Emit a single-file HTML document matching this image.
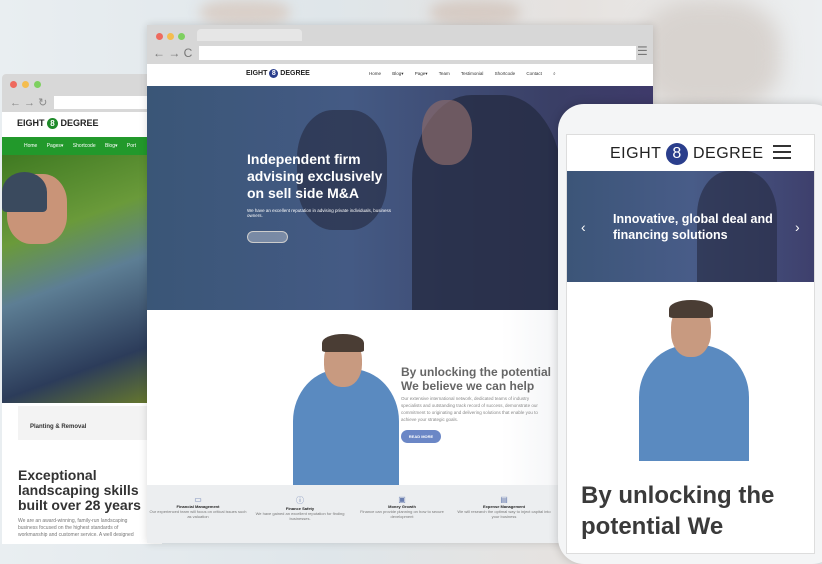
<!DOCTYPE html><html><head><style>
*{margin:0;padding:0;box-sizing:border-box}
body{width:822px;height:543px;overflow:hidden;position:relative;font-family:"Liberation Sans",sans-serif;background:linear-gradient(90deg,#e9eef1,#dfe6ea 40%,#e6e2df 70%,#eceff1)}
.abs{position:absolute}
.dot{position:absolute;width:7px;height:7px;border-radius:50%}
</style></head><body>
<div class="abs" style="left:200px;top:0;width:90px;height:25px;background:#d9cfc8;border-radius:40%;filter:blur(6px)"></div>
<div class="abs" style="left:430px;top:0;width:90px;height:25px;background:#d6cbc4;border-radius:40%;filter:blur(6px)"></div>
<div class="abs" style="left:640px;top:0;width:140px;height:110px;background:#d8d3cf;border-radius:40%;filter:blur(10px)"></div>

<!-- left browser -->
<div class="abs" style="left:2px;top:74px;width:160px;height:470px;background:#fff;border-radius:4px 0 0 0;overflow:hidden">
 <div class="abs" style="left:0;top:0;width:160px;height:38px;background:#d8d8d8"></div>
 <div class="dot" style="left:8px;top:7px;background:#ee6a5e"></div><div class="dot" style="left:20px;top:7px;background:#f4bd4f"></div><div class="dot" style="left:32px;top:7px;background:#7ed060"></div>
 <div class="abs" style="left:8px;top:22px;font-size:11px;color:#888">← → ↻</div>
 <div class="abs" style="left:52px;top:22px;width:110px;height:13px;background:#fff"></div>
 <div class="abs" style="left:15px;top:44px;font-size:9px;font-weight:bold;color:#222">EIGHT <span style="display:inline-block;width:11px;height:11px;border-radius:50%;background:#1f8a2a;color:#fff;text-align:center;font-size:8px;line-height:11px">8</span> DEGREE</div>
 <div class="abs" style="left:0;top:63px;width:160px;height:18px;background:#22992b;color:#fff;font-size:5px;line-height:18px;padding-left:22px;word-spacing:8px">Home Pages▾ Shortcode Blog▾ Port</div>
 <div class="abs" style="left:0;top:81px;width:160px;height:248px;background:linear-gradient(160deg,#3f7a22,#6a9a3a 30%,#5d7e94 50%,#2c3c5a 80%,#6a7c2a)"></div>
 <div class="abs" style="left:5px;top:100px;width:60px;height:70px;border-radius:40%;background:#c99478"></div>
 <div class="abs" style="left:0;top:98px;width:45px;height:40px;border-radius:50% 50% 10% 10%;background:#3a4a5e"></div>
 <div class="abs" style="left:16px;top:332px;width:140px;height:34px;background:#f3f3f3"></div>
 <div class="abs" style="left:28px;top:350px;font-size:6px;font-weight:bold;color:#333">Planting &amp; Removal</div>
 <div class="abs" style="left:16px;top:394px;font-size:14px;font-weight:bold;color:#333;line-height:15px">Exceptional<br>landscaping skills<br>built over 28 years</div>
 <div class="abs" style="left:16px;top:444px;font-size:5px;color:#777;line-height:7px;width:125px">We are an award-winning, family-run landscaping business focused on the highest standards of workmanship and customer service. A well designed</div>
</div>

<!-- middle browser -->
<div class="abs" style="left:147px;top:25px;width:506px;height:518px;background:#fff;overflow:hidden;box-shadow:0 0 8px rgba(0,0,0,.15)">
 <div class="abs" style="left:0;top:0;width:506px;height:39px;background:#d7d7d7"></div>
 <div class="abs" style="left:50px;top:4px;width:105px;height:12px;background:#e6e6e6;border-radius:4px 4px 0 0"></div>
 <div class="dot" style="left:9px;top:8px;background:#ee6a5e"></div><div class="dot" style="left:20px;top:8px;background:#f4bd4f"></div><div class="dot" style="left:31px;top:8px;background:#7ed060"></div>
 <div class="abs" style="left:6px;top:21px;font-size:12px;color:#777">← → C</div>
 <div class="abs" style="left:52px;top:21px;width:437px;height:14px;background:#fff"></div>
 <div class="abs" style="left:490px;top:19px;font-size:12px;color:#777">☰</div>
 <div class="abs" style="left:99px;top:44px;font-size:7px;font-weight:bold;color:#222">EIGHT <span style="display:inline-block;width:9px;height:9px;border-radius:50%;background:#2a3e8c;color:#fff;text-align:center;font-size:7px;line-height:9px">8</span> DEGREE</div>
 <div class="abs" style="left:222px;top:46px;font-size:4.5px;color:#333;word-spacing:10px">Home Blog▾ Page▾ Team Testimonial Shortcode Contact ⌕</div>
 <div class="abs" style="left:0;top:61px;width:506px;height:224px;background:linear-gradient(90deg,#3a5677,#445a84 40%,#3a3f66 80%,#3e3a6a)"></div>
 <div class="abs" style="left:150px;top:85px;width:90px;height:120px;border-radius:40%;background:#2a3048;opacity:.7"></div>
 <div class="abs" style="left:265px;top:70px;width:150px;height:215px;border-radius:40% 40% 0 0;background:#252c44;opacity:.8"></div>
 <div class="abs" style="left:275px;top:75px;width:50px;height:65px;border-radius:45%;background:#8a6a6a;opacity:.7"></div>
 <div class="abs" style="left:100px;top:126px;font-size:14px;font-weight:bold;color:#fff;line-height:17px">Independent firm<br>advising exclusively<br>on sell side M&amp;A</div>
 <div class="abs" style="left:100px;top:183px;font-size:4.5px;color:#fff;width:160px">We have an excellent reputation in advising private individuals, business owners.</div>
 <div class="abs" style="left:100px;top:206px;width:41px;height:12px;border:1px solid #ccc;border-radius:6px;background:rgba(255,255,255,.3)"></div>
 <div class="abs" style="left:0;top:285px;width:506px;height:175px;background:linear-gradient(90deg,#fff 70%,#e4e7eb)"></div>
 <div class="abs" style="left:146px;top:344px;width:106px;height:116px;border-radius:45% 45% 0 0;background:#5a8ac0"></div>
 <div class="abs" style="left:177px;top:312px;width:38px;height:50px;border-radius:45%;background:#c89a80"></div>
 <div class="abs" style="left:175px;top:309px;width:42px;height:18px;border-radius:50% 50% 10% 10%;background:#4a3d34"></div>
 <div class="abs" style="left:254px;top:340px;font-size:12px;font-weight:bold;color:#666;line-height:14px">By unlocking the potential<br>We believe we can help</div>
 <div class="abs" style="left:254px;top:370px;font-size:4.5px;color:#888;line-height:7px;width:146px">Our extensive international network, dedicated teams of industry specialists and outstanding track record of success, demonstrate our commitment to originating and delivering solutions that enable you to achieve your strategic goals.</div>
 <div class="abs" style="left:254px;top:405px;width:40px;height:13px;border-radius:7px;background:#6b87c6;color:#fff;font-size:4px;font-weight:bold;text-align:center;line-height:13px">READ MORE</div>
 <div class="abs" style="left:0;top:460px;width:506px;height:58px;background:#eceef0"></div>
 <div class="abs" style="left:0;top:470px;width:506px;display:flex;font-size:4px;color:#777;text-align:center">
  <div style="width:102px"><div style="color:#6b7fb0;font-size:8px">▭</div><b style="color:#222">Financial Management</b><br>Our experienced team will focus on critical issues such as valuation</div>
  <div style="width:102px"><div style="color:#6b7fb0;font-size:8px">ⓘ</div><b style="color:#222">Finance Safety</b><br>We have gained an excellent reputation for finding businesses.</div>
  <div style="width:102px"><div style="color:#6b7fb0;font-size:8px">▣</div><b style="color:#222">Money Growth</b><br>Finance can provide planning on how to secure development</div>
  <div style="width:102px"><div style="color:#6b7fb0;font-size:8px">▤</div><b style="color:#222">Expense Management</b><br>We will research the optimal way to inject capital into your business</div>
 </div>
</div>

<!-- phone -->
<div class="abs" style="left:558px;top:104px;width:280px;height:460px;background:#f4f5f6;border-radius:26px;box-shadow:0 0 10px rgba(0,0,0,.2)"></div>
<div class="abs" style="left:566px;top:134px;width:249px;height:420px;background:#fff;overflow:hidden;border:1px solid #ddd">
 <div class="abs" style="left:43px;top:8px;font-size:16px;color:#222;letter-spacing:.5px">EIGHT <span style="display:inline-block;width:22px;height:22px;border-radius:50%;background:#2a3e8c;color:#fff;text-align:center;font-size:16px;line-height:22px">8</span> DEGREE</div>
 <div class="abs" style="left:206px;top:10px;width:18px;height:2px;background:#333;box-shadow:0 6px 0 #333,0 12px 0 #333"></div>
 <div class="abs" style="left:0;top:36px;width:249px;height:111px;background:linear-gradient(90deg,#3c5578,#485c88 50%,#3e3f6c)"></div>
 <div class="abs" style="left:130px;top:36px;width:80px;height:111px;border-radius:40% 40% 0 0;background:#2a2f48;opacity:.7"></div>
 <div class="abs" style="left:46px;top:76px;font-size:12.5px;font-weight:bold;color:#fff;line-height:16px">Innovative, global deal and<br>financing solutions</div>
 <div class="abs" style="left:14px;top:84px;color:#fff;font-size:14px">‹</div><div class="abs" style="left:228px;top:84px;color:#fff;font-size:14px">›</div>
 <div class="abs" style="left:72px;top:210px;width:110px;height:116px;border-radius:45% 45% 0 0;background:#5a8ac0"></div>
 <div class="abs" style="left:104px;top:168px;width:40px;height:54px;border-radius:45%;background:#c89a80"></div>
 <div class="abs" style="left:102px;top:165px;width:44px;height:18px;border-radius:50% 50% 10% 10%;background:#4a3d34"></div>
 <div class="abs" style="left:14px;top:345px;font-size:24px;font-weight:bold;color:#3a3a3a;line-height:31px;white-space:nowrap">By unlocking the<br>potential We</div>
</div>
</body></html>
